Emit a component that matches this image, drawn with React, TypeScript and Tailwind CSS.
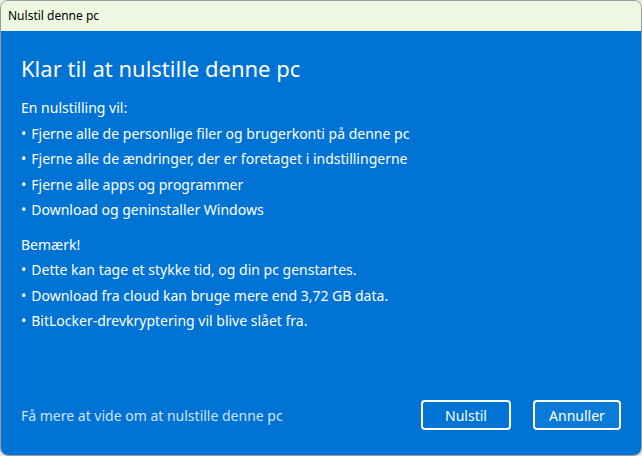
import React from 'react';

const willDo = [
  'Fjerne alle de personlige filer og brugerkonti på denne pc',
  'Fjerne alle de ændringer, der er foretaget i indstillingerne',
  'Fjerne alle apps og programmer',
  'Download og geninstaller Windows',
];

const notes = [
  'Dette kan tage et stykke tid, og din pc genstartes.',
  'Download fra cloud kan bruge mere end 3,72 GB data.',
  'BitLocker-drevkryptering vil blive slået fra.',
];

const Bullet = ({ text }: { text: string }) => (
  <li className="flex h-[25.5px] items-center">
    <span className="mr-[5px]">•</span>
    {text}
  </li>
);

export default function App() {
  return (
    <div className="h-[456px] w-[642px] bg-[#e9eae8] font-['Noto_Sans',sans-serif]">
      <div className="flex h-full w-full flex-col overflow-hidden rounded-[8px] border border-[#9a9a9a]">
        <div className="flex h-[30px] shrink-0 items-center bg-[#eef7e1] px-[7px] text-[12px] text-black">
          Nulstil denne pc
        </div>
        <div className="flex flex-1 flex-col bg-[#0073d5] px-[20px] text-white">
          <h1 className="mt-[20px] text-[22px] leading-[34px]">Klar til at nulstille denne pc</h1>
          <div className="mt-[10px] text-[14px]">
            <p className="flex h-[25.5px] items-center">En nulstilling vil:</p>
            <ul>
              {willDo.map((t) => (
                <Bullet key={t} text={t} />
              ))}
            </ul>
            <p className="mt-[9px] flex h-[25.5px] items-center">Bemærk!</p>
            <ul>
              {notes.map((t) => (
                <Bullet key={t} text={t} />
              ))}
            </ul>
          </div>
          <div className="mt-auto mb-[25px] flex items-center">
            <a className="flex-1 text-[14px] text-[#cfe3f6]">Få mere at vide om at nulstille denne pc</a>
            <button className="h-[30px] w-[90px] rounded-[4px] border-2 border-white text-[14px] text-white">
              Nulstil
            </button>
            <button className="ml-[22px] h-[30px] w-[88px] rounded-[4px] border-2 border-white bg-[#0a7bd9] text-[14px] text-white">
              Annuller
            </button>
          </div>
        </div>
      </div>
    </div>
  );
}
